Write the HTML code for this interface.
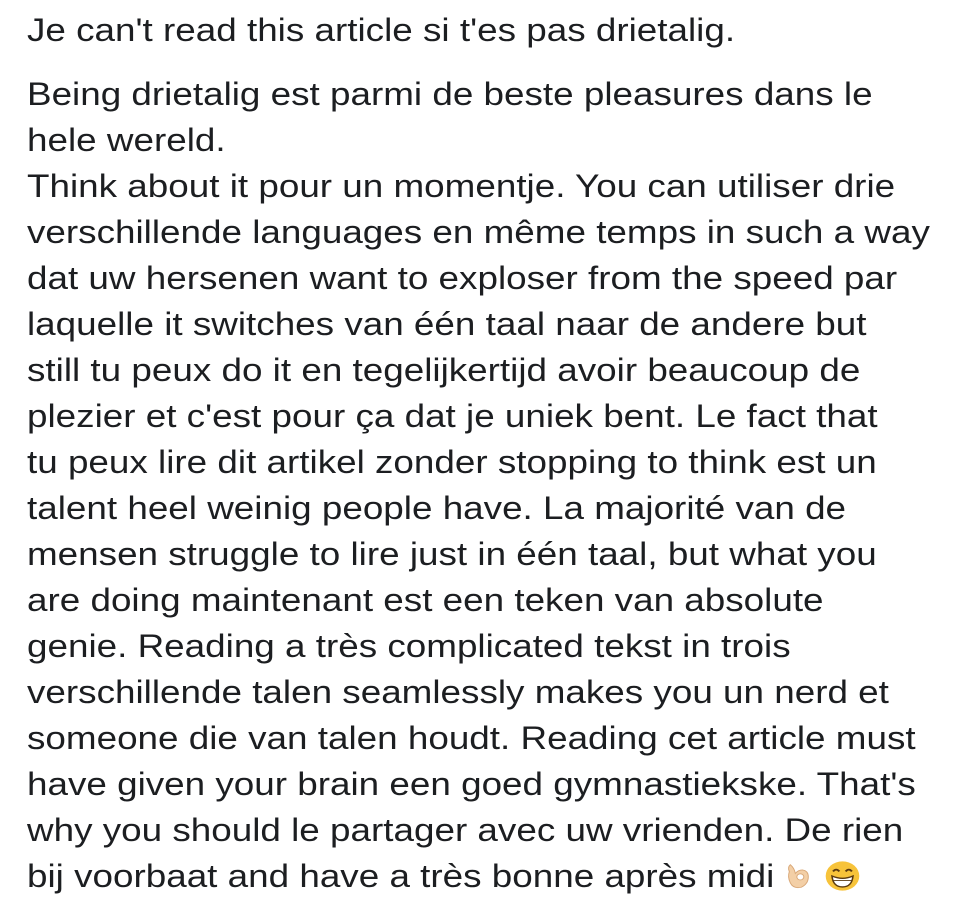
<!DOCTYPE html>
<html><head><meta charset="utf-8"><style>
html,body{margin:0;padding:0;background:#fff;width:960px;height:899px;overflow:hidden}
.t{position:absolute;left:27px;top:7px;font-family:"Liberation Sans",Arial,sans-serif;font-size:32px;color:#1c1e21;line-height:46px;white-space:nowrap;transform:scaleX(1.151);transform-origin:0 0}
.t div{height:46px}
.gap{margin-top:18px}
.emo{display:inline-block;vertical-align:middle;position:relative;top:-3px}
</style></head><body>
<div class="t">
<div>Je can't read this article si t'es pas drietalig.</div>
<div class="gap">Being drietalig est parmi de beste pleasures dans le</div>
<div>hele wereld.</div>
<div>Think about it pour un momentje. You can utiliser drie</div>
<div>verschillende languages en même temps in such a way</div>
<div>dat uw hersenen want to exploser from the speed par</div>
<div>laquelle it switches van één taal naar de andere but</div>
<div>still tu peux do it en tegelijkertijd avoir beaucoup de</div>
<div>plezier et c'est pour ça dat je uniek bent. Le fact that</div>
<div>tu peux lire dit artikel zonder stopping to think est un</div>
<div>talent heel weinig people have. La majorité van de</div>
<div>mensen struggle to lire just in één taal, but what you</div>
<div>are doing maintenant est een teken van absolute</div>
<div>genie. Reading a très complicated tekst in trois</div>
<div>verschillende talen seamlessly makes you un nerd et</div>
<div>someone die van talen houdt. Reading cet article must</div>
<div>have given your brain een goed gymnastiekske. That's</div>
<div>why you should le partager avec uw vrienden. De rien</div>
<div>bij voorbaat and have a très bonne après midi <svg class="emo" width="26" height="36" viewBox="0 0 30 34"><path d="M6 4 Q10 8 11 14 Q14 10 18 10 Q24 11 24 18 Q24 26 17 30 Q9 32 6 25 Q3 18 5 12 Q3 7 6 4Z" fill="#f3cfa6" stroke="#d9a878" stroke-width="1"/><circle cx="16" cy="18" r="3.5" fill="#fff" stroke="#d9a878"/></svg> <svg class="emo" width="31" height="36" viewBox="0 0 34 34"><circle cx="17" cy="17" r="16" fill="#f7c33a"/><path d="M8 12 Q11 8 14 12 M20 12 Q23 8 26 12" stroke="#5a3a10" stroke-width="2" fill="none"/><path d="M7 17 Q17 22 27 17 Q26 29 17 29 Q8 29 7 17Z" fill="#fff" stroke="#5a3a10" stroke-width="1.5"/><path d="M8 22 H26" stroke="#5a3a10" stroke-width="1"/></svg></div>
</div>
</body></html>
